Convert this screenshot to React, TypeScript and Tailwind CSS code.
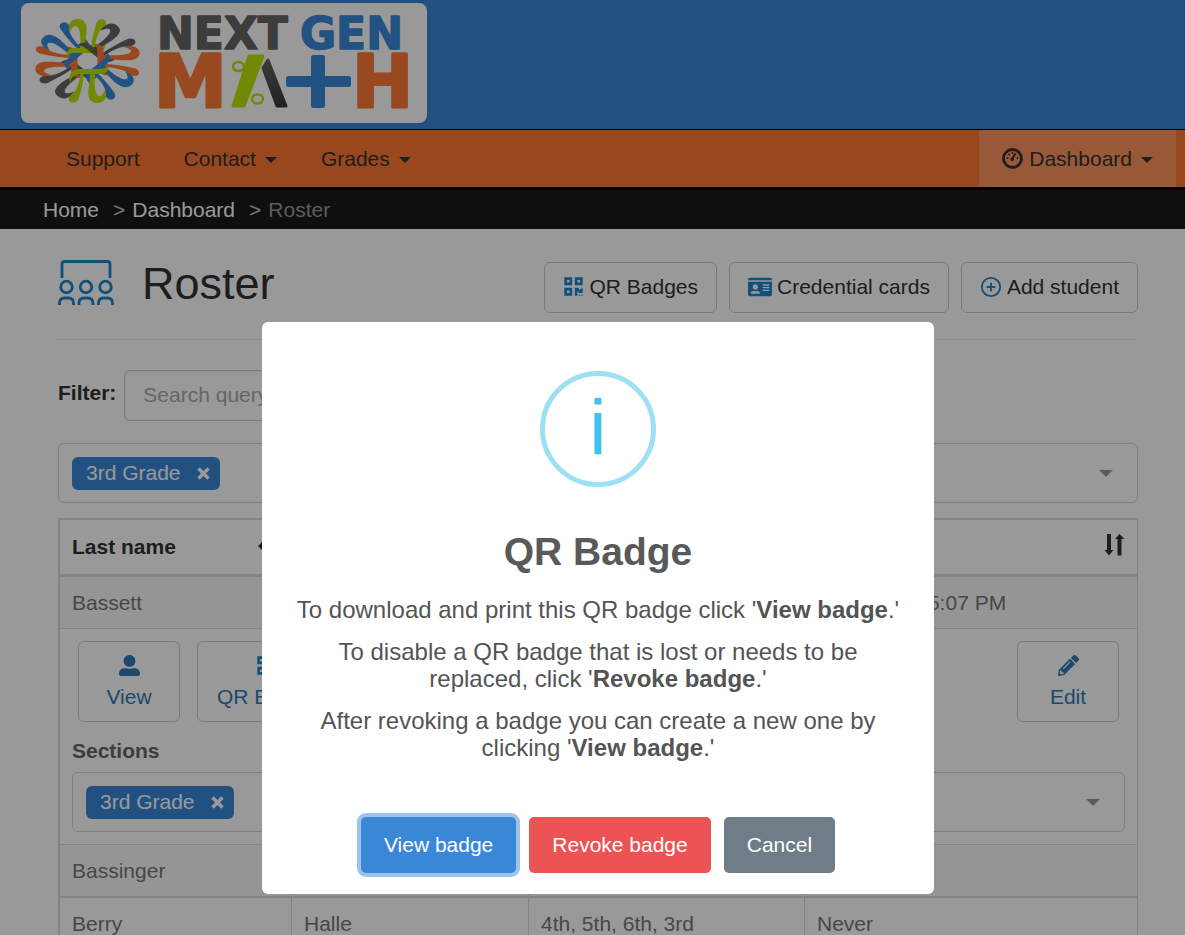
import { ReactNode } from "react";
import { FaIdCard, FaPencilAlt, FaQrcode, FaUserAlt } from "react-icons/fa";
import { CirclePlus } from "lucide-react";

const PETALS = [
  { angle: 45, color: "#646464" },
  { angle: 90, color: "#ff7b35" },
  { angle: 135, color: "#3a89d9" },
  { angle: 180, color: "#b9e600" },
  { angle: 225, color: "#646464" },
  { angle: 270, color: "#ff7b35" },
  { angle: 315, color: "#3a89d9" },
  { angle: 0, color: "#b9e600" },
];

function Logo() {
  return (
    <svg width="406" height="120" viewBox="0 0 406 120" role="img" aria-label="NextGen Math">
      <defs>
        <linearGradient id="leg" x1="0" y1="0" x2="0" y2="1">
          <stop offset="0" stopColor="#646464" />
          <stop offset="1" stopColor="#363a3c" />
        </linearGradient>
      </defs>
      {/* ring of eight pi signs */}
      <g transform="translate(66.5 58) scale(1.24 1)">
        {PETALS.map(({ angle, color }) => (
          <g key={angle} transform={`rotate(${angle})`} fill={color}>
            <path d="M-14 22C-16 13-12 8-6 8H10C13 8 15 7 17 5C17 10 15 13 10 13H-6C-11 13-13 16-14 22Z" />
            <path d="M-6 12H-3C-3 20-5 29-7 37C-8 43-15 43-15 38C-15 34-11 33-9 28C-7 23-6 18-6 12Z" />
            <path d="M2 12H6C6 19 5 25 7 32C9 37 12 36 14 29C17 37 13 42 8 42C1 42 0 35 1 26C2 20 2 16 2 12Z" />
          </g>
        ))}
      </g>
      <g fontFamily="'DejaVu Sans', sans-serif" fontWeight="700" strokeLinejoin="round">
        <g fontSize="44" strokeWidth="1.500">
          <text x="136" y="46" fill="#646464" stroke="#646464">NEXT</text>
          <text x="279" y="46" fill="#3a89d9" stroke="#3a89d9">GEN</text>
        </g>
        <g fontSize="73" strokeWidth="3" fill="#ff7b35" stroke="#ff7b35">
          <text x="133" y="104">M</text>
          <text x="331" y="104">H</text>
        </g>
      </g>
      <path d="M228 53H242L223 103H212Z" fill="#b9e600" stroke="#b9e600" strokeWidth="3" strokeLinejoin="round" />
      <g fill="none" stroke="#b9e600" strokeWidth="2.500">
        <ellipse cx="217.500" cy="63.500" rx="5.500" ry="4.500" />
        <ellipse cx="236.500" cy="96" rx="5.500" ry="4.500" />
      </g>
      <path d="M242 65L247 57L265 103H256Z" fill="url(#leg)" stroke="url(#leg)" strokeWidth="3" strokeLinejoin="round" />
      <rect x="265" y="73" width="65" height="11" rx="2.500" fill="#3a89d9" />
      <rect x="290" y="52" width="14" height="53" rx="2.500" fill="#3a89d9" />
    </svg>
  );
}

function GaugeIcon() {
  return (
    <svg width="21" height="21" viewBox="0 0 21 21" aria-hidden="true">
      <circle cx="10.500" cy="10.500" r="9" fill="none" stroke="#333" strokeWidth="2.800" />
      <g fill="#333">
        <circle cx="5.500" cy="10" r="1" />
        <circle cx="7.200" cy="6.500" r="1" />
        <circle cx="10.500" cy="5" r="1" />
        <circle cx="15.500" cy="10" r="1" />
        <path d="M12.800 5L14.400 5.700L11.800 10.500A1.800 1.800 0 1 1 9.800 9.500Z" />
      </g>
    </svg>
  );
}

function RosterIcon() {
  return (
    <svg width="56" height="46" viewBox="0 0 56 46" fill="none" stroke="#1c86cc" strokeWidth="2.800" aria-hidden="true">
      <path d="M4 18V4Q4 1.500 6.500 1.500H49.500Q52 1.500 52 4V18" />
      {[8.5, 28, 47.5].map((x) => (
        <g key={x}>
          <circle cx={x} cy="27" r="5.800" />
          <path d={`M${x - 7} 45V43.500Q${x - 7} 38 ${x - 2} 38H${x + 2}Q${x + 7} 38 ${x + 7} 43.500V45`} />
        </g>
      ))}
    </svg>
  );
}

function SortIcon({ active = false }: { active?: boolean }) {
  return (
    <svg width="21" height="22" viewBox="0 0 21 22" fill="#333" aria-hidden="true">
      {active ? (
        <path d="M0 12L4.500 7.500V10.500H16.500V7.500L21 12L16.500 16.500V13.500H4.500V16.500Z" />
      ) : (
        <>
          <path d="M3 0H7V16H9.500L5 21.500L.5 16H3Z" />
          <path d="M13.500 21.500H17.500V5H20.500L15.500 0L11 5H13.500Z" />
        </>
      )}
    </svg>
  );
}

function Caret() {
  return <span className="mt-[3px] border-x-6 border-t-6 border-x-transparent border-t-[#333]" />;
}

function NavItem({ label, menu = false }: { label: string; menu?: boolean }) {
  return (
    <a href="#" className="flex items-center gap-[9px] px-[22px]">
      {label}
      {menu && <Caret />}
    </a>
  );
}

function ToolButton({ icon, children }: { icon: ReactNode; children: ReactNode }) {
  return (
    <button className="flex h-[51px] items-center gap-[5px] rounded-md border border-[#ccc] px-[18px] pb-[2px] whitespace-nowrap">
      <span className="text-[#1c86cc]">{icon}</span>
      {children}
    </button>
  );
}

function SectionSelect({ value }: { value: string }) {
  return (
    <div className="flex h-[60px] items-center justify-between rounded-md border border-[#d2d4dc] pr-6 pl-[13px]">
      <span className="flex h-[33px] items-center gap-4 rounded-md bg-[#3a87d8] pr-[10px] pl-[14px] text-white">
        {value}
        <button aria-label={`Remove ${value}`}>
          <svg width="13" height="13" viewBox="0 0 13 13" stroke="#fff" strokeWidth="3.500">
            <path d="M1.500 1.500L11.500 11.500M11.500 1.500L1.500 11.500" />
          </svg>
        </button>
      </span>
      <button aria-label="Choose sections" className="border-x-7 border-t-7 border-x-transparent border-t-[#999]" />
    </div>
  );
}

function ActionButton({ icon, label }: { icon: ReactNode; label: string }) {
  return (
    <button className="flex h-[81px] min-w-[102px] flex-col items-center gap-[6px] rounded-md border border-[#ccc] px-[19px] pt-[13px] leading-[30px] text-[#337ab7]">
      {icon}
      {label}
    </button>
  );
}

function StudentRow({ cells, shaded, className }: { cells: string[]; shaded?: boolean; className: string }) {
  return (
    <tr className={shaded ? "bg-[#f9f9f9]" : ""}>
      {cells.map((cell, i) => (
        <td key={i} className={`border-[#ddd] px-3 text-[#777] not-last:border-r ${className}`}>
          {cell}
        </td>
      ))}
    </tr>
  );
}

const COLUMNS = ["Last name", "First name", "Sections", "Last login"];

function Roster() {
  return (
    <table className="mt-[15px] w-full table-fixed border-separate border-spacing-0 border-t-2 border-r border-l-2 border-[#ddd]">
      <colgroup>
        <col className="w-[232px]" />
        <col className="w-[237px]" />
        <col className="w-[276px]" />
        <col />
      </colgroup>
      <thead>
        <tr>
          {COLUMNS.map((name, i) => (
            <th key={name} className="h-[57px] border-b-3 border-[#ddd] px-3 text-left not-last:border-r">
              <div className="flex items-center justify-between">
                {name}
                <button aria-label={`Sort by ${name}`} className="pb-1">
                  <SortIcon active={i === 0} />
                </button>
              </div>
            </th>
          ))}
        </tr>
      </thead>
      <tbody>
        <StudentRow shaded className="h-[52px] border-b" cells={["Bassett", "Aiden", "3rd", "10/12/2021 5:07 PM"]} />
        <tr>
          <td colSpan={4} className="h-[216px] border-b border-[#ddd] px-3 pt-3 pb-3 align-top">
            <div className="flex gap-[17px] px-[6px]">
              <ActionButton icon={<FaUserAlt size={21} />} label="View" />
              <ActionButton icon={<FaQrcode size={21} className="text-[#1c86cc]" />} label="QR Badge" />
              <div className="ml-auto">
                <ActionButton icon={<FaPencilAlt size={21} />} label="Edit" />
              </div>
            </div>
            <div className="mt-[14px] mb-[6px] leading-[30px] font-bold text-[#666]">Sections</div>
            <SectionSelect value="3rd Grade" />
          </td>
        </tr>
        <StudentRow shaded className="h-[53px] border-b-2" cells={["Bassinger", "Nora", "3rd", ""]} />
        <StudentRow className="h-[53px] border-b" cells={["Berry", "Halle", "4th, 5th, 6th, 3rd", "Never"]} />
      </tbody>
    </table>
  );
}

function BadgeDialog() {
  return (
    <div className="fixed inset-0 flex items-start justify-center bg-black/40 pt-[322px] pl-[11px]">
      <div
        role="dialog"
        aria-modal="true"
        aria-labelledby="badge-title"
        className="w-full max-w-[672px] rounded-md bg-white px-8 pt-[49px] pb-[21px] text-center text-[#545454]"
      >
        <div className="mx-auto flex size-[116px] items-center justify-center rounded-full border-5 border-[#9de0f6] pb-[2px] text-[78px] leading-none text-[#3fc3ee]">
          i
        </div>
        <h2 id="badge-title" className="mt-[41px] text-[39px] leading-[48px] font-bold text-[#595959]">
          QR Badge
        </h2>
        <div className="mt-5 space-y-[15px] text-[24px] leading-[27px]">
          <p>
            To download and print this QR badge click '<b>View badge</b>.'
          </p>
          <p>
            To disable a QR badge that is lost or needs to be replaced, click '<b>Revoke badge</b>.'
          </p>
          <p>
            After revoking a badge you can create a new one by clicking '<b>View badge</b>.'
          </p>
        </div>
        <div className="mt-14 flex justify-center gap-[13px] text-white">
          <button className="h-14 rounded-[5px] bg-[#3a87d8] px-[23px] ring-4 ring-[#3a87d8]/50">View badge</button>
          <button className="h-14 rounded-[5px] bg-[#eb5355] px-[23px]">Revoke badge</button>
          <button className="h-14 rounded-[5px] bg-[#6e7d88] px-[23px]">Cancel</button>
        </div>
      </div>
    </div>
  );
}

export default function App() {
  return (
    <div className="h-screen overflow-hidden bg-white font-['Liberation_Sans',Arial,sans-serif] text-[21px] leading-[30px] text-[#333]">
      <header className="border-b border-black bg-[#3a87d8] px-[21px] pt-[3px] pb-[6px]">
        <a href="#" className="block h-[120px] w-[406px] rounded-lg bg-white">
          <Logo />
        </a>
      </header>
      <nav className="flex h-[60px] border-b-3 border-black bg-[#ff7833] pr-[9px] pl-11">
        <NavItem label="Support" />
        <NavItem label="Contact" menu />
        <NavItem label="Grades" menu />
        <a href="#" className="ml-auto flex items-center gap-[6px] bg-[#ff955e] px-[23px]">
          <GaugeIcon />
          Dashboard
          <span className="ml-[3px] flex">
            <Caret />
          </span>
        </a>
      </nav>
      <nav aria-label="Breadcrumb" className="flex h-[39px] items-center bg-[#19191c] pl-[43px] text-white">
        <a href="#">Home</a>
        <span className="mr-[7px] ml-[14px] text-[#ccc]">&gt;</span>
        <a href="#">Dashboard</a>
        <span className="mr-[7px] ml-[14px] text-[#ccc]">&gt;</span>
        <span className="text-[#999]">Roster</span>
      </nav>
      <main className="pr-[47px] pl-[58px]">
        <div className="flex h-[111px] items-start gap-3 border-b border-[#eee] pt-[31px]">
          <RosterIcon />
          <h1 className="ml-4 text-[45px] leading-[48px]">Roster</h1>
          <div className="ml-auto flex gap-3 pt-[2px]">
            <ToolButton icon={<FaQrcode size={21} />}>QR Badges</ToolButton>
            <ToolButton icon={<FaIdCard size={24} />}>Credential cards</ToolButton>
            <ToolButton icon={<CirclePlus size={22} />}>Add student</ToolButton>
          </div>
        </div>
        <div className="mt-[30px] mb-[22px] flex gap-2">
          <label htmlFor="filter" className="pt-2 font-bold">
            Filter:
          </label>
          <input
            id="filter"
            placeholder="Search query"
            className="h-[51px] w-[420px] rounded-md border border-[#ccc] px-[18px] pb-[2px] inset-shadow-sm placeholder:text-[#aaa]"
          />
        </div>
        <SectionSelect value="3rd Grade" />
        <Roster />
      </main>
      <BadgeDialog />
    </div>
  );
}
